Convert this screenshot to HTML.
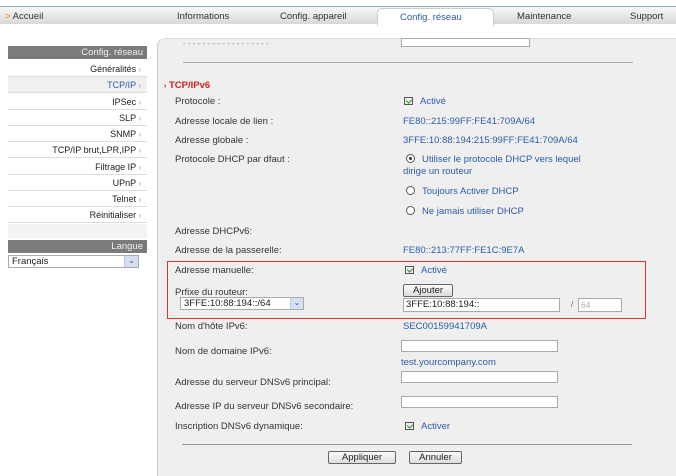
<!DOCTYPE html>
<html><head><meta charset="utf-8"><style>
*{margin:0;padding:0;box-sizing:border-box}
html,body{width:676px;height:476px;overflow:hidden}
body{background:#fff;font-family:"Liberation Sans",Arial,sans-serif;font-size:9.5px;color:#333;position:relative}
.a{position:absolute;white-space:nowrap}
.topline{left:0;top:6px;width:676px;height:1px;background:#8fb0cc}
.bar{left:0;top:7px;width:676px;height:17px;background:linear-gradient(#f8f8f8,#d8d8d8)}
.tab{top:11px;color:#333}
.act{left:377px;top:8px;width:117px;height:18px;background:#fff;border:1px solid #ccc;border-bottom:none;border-radius:5px 5px 0 0;color:#2a5ca8;padding:3px 0 0 22px}
.panel{left:157px;top:38px;width:530px;height:440px;background:#efefef;border-left:1px solid #c8c8c8;border-top:1px solid #ddd;border-radius:8px 0 0 0}
.sh{left:8px;width:139px;height:13px;background:#7b7b7b;color:#eee;text-align:right;padding-right:4px;font-size:9.5px;line-height:13px}
.si{left:8px;width:139px;height:16px;border-bottom:1px solid #ddd;text-align:right;padding-right:6px;line-height:16px;font-size:9px;color:#222}
.si:after{content:" ›";color:#999;font-size:8px}
.v{color:#2a5ca8}
.l{left:175px}
.in{background:#fff;border:1px solid #aaa;height:12px}
.cb{display:inline-block;width:9px;height:8px;border:1px solid #555;background:#eee;vertical-align:-1px;margin-right:7px;position:relative}
.cb:after{content:"";position:absolute;left:2px;top:0;width:3px;height:4px;border:solid #2a8a2a;border-width:0 1.5px 1.5px 0;transform:rotate(45deg)}
.rd{display:inline-block;width:9px;height:9px;border:1px solid #555;border-radius:50%;vertical-align:-1px;margin-right:7px;position:relative;background:#fff}
.btn{border:1px solid #666;border-radius:2px;background:linear-gradient(#fafafa,#ddd);height:13px;text-align:center;line-height:11px;color:#222}
.arr{background:#d4e0f2;color:#2a5ca8;font-size:8px;text-align:center;line-height:10px;border-left:1px solid #b8c8e0}
</style></head><body>
<div class="a topline"></div>
<div class="a bar"></div>
<div class="a tab" style="left:5px"><span style="color:#e08020">&gt;</span> Accueil</div>
<div class="a tab" style="left:177px">Informations</div>
<div class="a tab" style="left:280px">Config. appareil</div>
<div class="a act">Config. réseau</div>
<div class="a tab" style="left:517px">Maintenance</div>
<div class="a tab" style="left:630px">Support</div>

<div class="a sh" style="top:46px">Config. réseau</div>
<div class="a si" style="top:61px">Généralités</div>
<div class="a si" style="top:77px;background:#f0f0f0;color:#2a5ca8">TCP/IP</div>
<div class="a si" style="top:94px">IPSec</div>
<div class="a si" style="top:110px">SLP</div>
<div class="a si" style="top:126px">SNMP</div>
<div class="a si" style="top:142px">TCP/IP brut,LPR,IPP</div>
<div class="a si" style="top:159px">Filtrage IP</div>
<div class="a si" style="top:175px">UPnP</div>
<div class="a si" style="top:191px">Telnet</div>
<div class="a si" style="top:207px">Réinitialiser</div>
<div class="a" style="left:8px;top:224px;width:139px;height:14px;background:#f3f3f3"></div>
<div class="a sh" style="top:240px">Langue</div>
<div class="a in" style="left:8px;top:255px;width:131px;height:13px;padding-left:3px;line-height:11px;color:#222">Français</div>
<div class="a arr" style="left:124px;top:256px;width:14px;height:11px">⌄</div>

<div class="a panel"></div>
<div class="a" style="left:183px;top:39px;color:#888;font-size:8px">- - - - - - - - - - - - - - - - - -</div>
<div class="a in" style="left:401px;top:38px;width:129px;height:9px"></div>
<div class="a" style="left:183px;top:62px;width:450px;height:1px;background:#aaa"></div>
<div class="a" style="left:164px;top:80px;color:#d42020;font-weight:bold;font-size:9.5px"><span style="font-size:7px;color:#d42020">›</span> TCP/IPv6</div>

<div class="a l" style="top:96px">Protocole :</div><div class="a v" style="left:404px;top:96px"><span class="cb"></span>Activé</div>
<div class="a l" style="top:116px">Adresse locale de lien :</div><div class="a v" style="left:403px;top:116px">FE80::215:99FF:FE41:709A/64</div>
<div class="a l" style="top:135px">Adresse globale :</div><div class="a v" style="left:403px;top:135px">3FFE:10:88:194:215:99FF:FE41:709A/64</div>
<div class="a l" style="top:154px">Protocole DHCP par dfaut :</div>
<div class="a v" style="left:406px;top:154px"><span class="rd"><span style="position:absolute;left:2px;top:2px;width:3px;height:3px;border-radius:50%;background:#333"></span></span>Utiliser le protocole DHCP vers lequel</div>
<div class="a v" style="left:403px;top:166px">dirige un routeur</div>
<div class="a v" style="left:406px;top:186px"><span class="rd"></span>Toujours Activer DHCP</div>
<div class="a v" style="left:406px;top:206px"><span class="rd"></span>Ne jamais utiliser DHCP</div>
<div class="a l" style="top:226px">Adresse DHCPv6:</div>
<div class="a l" style="top:245px">Adresse de la passerelle:</div><div class="a v" style="left:403px;top:245px">FE80::213:77FF:FE1C:9E7A</div>

<div class="a" style="left:167px;top:261px;width:479px;height:58px;border:1.5px solid #e03030"></div>
<div class="a l" style="top:265px">Adresse manuelle:</div><div class="a v" style="left:405px;top:265px"><span class="cb"></span>Activé</div>
<div class="a l" style="top:287px">Prfixe du routeur:</div>
<div class="a in" style="left:180px;top:297px;width:124px;height:13px;padding-left:3px;line-height:11px;color:#222">3FFE:10:88:194::/64</div>
<div class="a arr" style="left:290px;top:298px;width:13px;height:11px">⌄</div>
<div class="a btn" style="left:403px;top:284px;width:50px">Ajouter</div>
<div class="a in" style="left:403px;top:298px;width:157px;height:14px;padding-left:2px;line-height:12px;color:#222">3FFE:10:88:194::</div>
<div class="a" style="left:571px;top:300px;color:#2a5ca8;font-size:8px">/</div>
<div class="a in" style="left:578px;top:298px;width:44px;height:14px;color:#aaa;padding-left:2px;line-height:12px;font-size:8.5px">64</div>

<div class="a l" style="top:321px">Nom d'hôte IPv6:</div><div class="a v" style="left:403px;top:321px">SEC00159941709A</div>
<div class="a l" style="top:346px">Nom de domaine IPv6:</div>
<div class="a in" style="left:401px;top:340px;width:157px"></div>
<div class="a v" style="left:401px;top:357px">test.yourcompany.com</div>
<div class="a l" style="top:377px">Adresse du serveur DNSv6 principal:</div>
<div class="a in" style="left:401px;top:371px;width:157px"></div>
<div class="a l" style="top:401px">Adresse IP du serveur DNSv6 secondaire:</div>
<div class="a in" style="left:401px;top:396px;width:157px"></div>
<div class="a l" style="top:421px">Inscription DNSv6 dynamique:</div><div class="a v" style="left:405px;top:421px"><span class="cb"></span>Activer</div>
<div class="a" style="left:182px;top:444px;width:450px;height:1px;background:#999"></div>
<div class="a btn" style="left:328px;top:451px;width:68px">Appliquer</div>
<div class="a btn" style="left:409px;top:451px;width:53px">Annuler</div>
</body></html>
